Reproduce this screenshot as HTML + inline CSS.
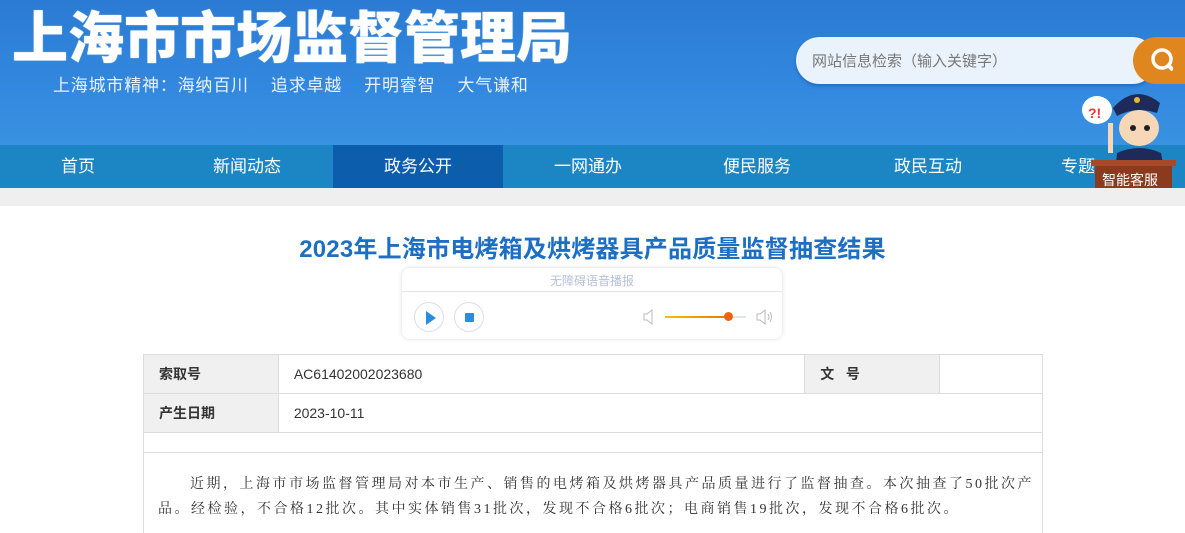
<!DOCTYPE html>
<html><head><meta charset="utf-8"><style>
*{margin:0;padding:0;box-sizing:border-box}
body{width:1185px;height:520px;overflow:hidden;background:#fff;font-family:"Liberation Sans","Noto Sans CJK SC",sans-serif;position:relative}
.hdr{position:absolute;left:0;top:0;width:1185px;height:145px;background:linear-gradient(180deg,#2b7bd3 0%,#3288de 60%,#3a92e2 100%)}
.t1{position:absolute;left:12px;top:-6px;font-size:56px;font-weight:900;color:#fff;letter-spacing:0px;white-space:nowrap;text-shadow:0 0 1px #fff}
.t2{position:absolute;left:53px;top:71px;font-size:17px;color:#e8f2ff;white-space:nowrap;letter-spacing:0.8px}
.srch{position:absolute;left:796px;top:37px;width:360px;height:47px;border-radius:24px;background:#eaf2fb;box-shadow:0 2px 3px rgba(0,40,120,.3)}
.srch span{position:absolute;left:16px;top:13px;font-size:15px;color:#777}
.sbtn{position:absolute;left:1133px;top:37px;width:60px;height:47px;border-radius:24px 0 0 24px;background:#e0861e}
.nav{position:absolute;left:0;top:145px;width:1185px;height:43px;background:#1c86c4}
.nav div{position:absolute;top:0;height:43px;line-height:43px;font-size:17px;color:#fff;text-align:center;width:170px}
.nav .on{background:#0c5ead}
.band{position:absolute;left:0;top:188px;width:1185px;height:18px;background:#efefef}
h1{position:absolute;left:0;width:1185px;top:229px;text-align:center;font-size:24px;color:#1d6fc4;font-weight:bold;letter-spacing:0.2px}
.ply{position:absolute;left:402px;top:268px;width:380px;height:71px;border-radius:8px;background:#fff;box-shadow:0 0 4px rgba(0,0,0,.15)}
table{position:absolute;left:143px;top:354px;width:900px;border-collapse:collapse;font-size:14px;color:#333}
td{border:1px solid #ddd;height:39px;padding-left:15px}
.l{background:#f0f0f0;font-weight:bold;width:135px}
.p{position:absolute;top:472px;left:158px;width:900px;font-size:14px;color:#333;line-height:25px;font-family:"Liberation Serif","Noto Serif CJK SC",serif;letter-spacing:2.5px;white-space:nowrap}
</style></head><body>
<div class="hdr">
<div class="t1">上海市市场监督管理局</div>
<div class="t2">上海城市精神：海纳百川&nbsp;&nbsp;&nbsp;&nbsp;追求卓越&nbsp;&nbsp;&nbsp;&nbsp;开明睿智&nbsp;&nbsp;&nbsp;&nbsp;大气谦和</div>
<div class="srch"><span>网站信息检索（输入关键字）</span></div>
<div class="sbtn"><svg width="40" height="47" viewBox="0 0 40 47"><circle cx="29" cy="22" r="9" fill="none" stroke="#fff" stroke-width="3.5"/><line x1="35" y1="28" x2="40" y2="33" stroke="#fff" stroke-width="4"/></svg></div>
</div>
<div class="nav">
<div style="left:-7px">首页</div><div style="left:162px">新闻动态</div><div class="on" style="left:333px">政务公开</div><div style="left:503px">一网通办</div><div style="left:672px">便民服务</div><div style="left:843px">政民互动</div><div style="left:1013px;text-align:left;padding-left:48px">专题</div>
</div>
<svg style="position:absolute;left:1075px;top:88px" width="110" height="110" viewBox="0 0 110 110">
<ellipse cx="22" cy="22" rx="15" ry="14" fill="#fff"/><text x="13" y="30" font-size="14" fill="#e33" font-weight="bold">?!</text>
<path d="M38 20 Q60 -5 85 15 L82 25 Q60 18 42 28Z" fill="#1d2a5a"/><circle cx="62" cy="12" r="3" fill="#e8b830"/>
<ellipse cx="64" cy="40" rx="20" ry="18" fill="#f6d8b8"/>
<circle cx="58" cy="40" r="3" fill="#222"/><circle cx="72" cy="40" r="3" fill="#222"/>
<path d="M42 65 Q64 55 86 65 L90 85 L40 85Z" fill="#1d2a5a"/>
<rect x="33" y="35" width="5" height="30" fill="#f6d8b8"/>
<rect x="20" y="76" width="77" height="26" fill="#8b3a1e" rx="2"/><rect x="16" y="72" width="85" height="6" fill="#a8492a"/>
<text x="27" y="97" font-size="14" fill="#fff" font-family="Noto Sans CJK SC,sans-serif">智能客服</text>
</svg>
<div class="band"></div>
<h1>2023年上海市电烤箱及烘烤器具产品质量监督抽查结果</h1>
<div class="ply">
<div style="position:absolute;top:4px;width:380px;text-align:center;font-size:12px;color:#b8c0d8">无障碍语音播报</div>
<div style="position:absolute;top:23px;left:0;width:380px;border-top:1px solid #dde4f5"></div>
<div style="position:absolute;left:12px;top:34px;width:30px;height:30px;border-radius:50%;border:1px solid #dde;"><div style="position:absolute;left:11px;top:8px;border-left:10px solid #2a8de0;border-top:7px solid transparent;border-bottom:7px solid transparent"></div></div>
<div style="position:absolute;left:52px;top:34px;width:30px;height:30px;border-radius:50%;border:1px solid #dde;"><div style="position:absolute;left:10px;top:10px;width:9px;height:9px;background:#2a8de0;border-radius:1px"></div></div>
<svg style="position:absolute;left:241px;top:40px" width="12" height="18" viewBox="0 0 12 18"><path d="M1 6 H4 L9 2 V16 L4 12 H1Z" fill="none" stroke="#bbb"/></svg>
<div style="position:absolute;left:263px;top:48px;width:64px;height:2px;background:linear-gradient(90deg,#f5c000,#f07010)"></div>
<div style="position:absolute;left:322px;top:44px;width:9px;height:9px;border-radius:50%;background:#f06010"></div>
<div style="position:absolute;left:331px;top:48px;width:13px;height:2px;background:#e0e4ee"></div>
<svg style="position:absolute;left:354px;top:40px" width="18" height="18" viewBox="0 0 18 18"><path d="M1 6 H4 L9 2 V16 L4 12 H1Z M12 6 Q14 9 12 12 M14 4 Q17 9 14 14" fill="none" stroke="#bbb"/></svg>
</div>
<table>
<tr><td class="l">索取号</td><td style="width:527px">AC61402002023680</td><td class="l" style="font-weight:bold">文&nbsp;&nbsp;&nbsp;号</td><td style="width:103px"></td></tr>
<tr><td class="l">产生日期</td><td colspan="3">2023-10-11</td></tr>
<tr><td colspan="4" style="height:20px"></td></tr>
<tr><td colspan="4" style="height:80px;border-bottom:none"></td></tr>
</table>
<div class="p"><span style="padding-left:32px"></span>近期，上海市市场监督管理局对本市生产、销售的电烤箱及烘烤器具产品质量进行了监督抽查。本次抽查了50批次产<br>品。经检验，不合格12批次。其中实体销售31批次，发现不合格6批次；电商销售19批次，发现不合格6批次。</div>
</body></html>
